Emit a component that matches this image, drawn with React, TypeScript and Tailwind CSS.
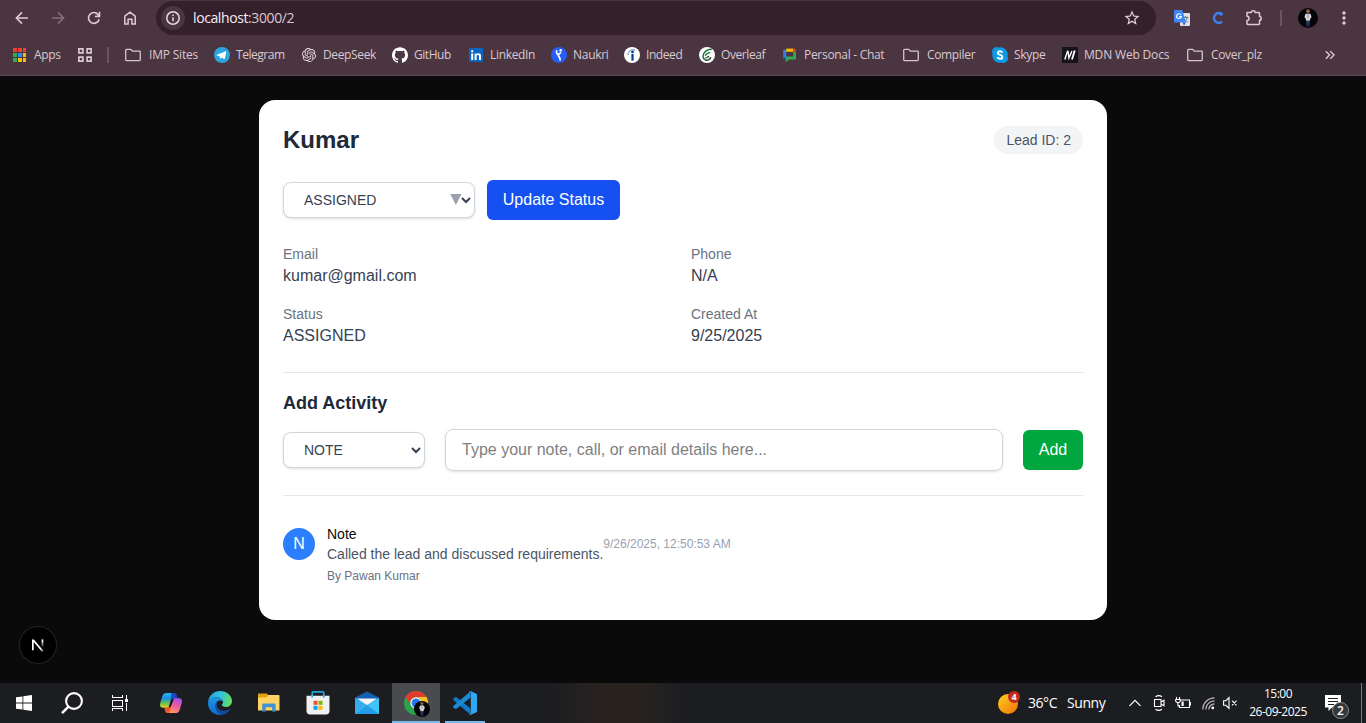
import React from "react";
import { MdStarBorder, MdMoreVert } from "react-icons/md";
import { SiOpenai, SiGithub } from "react-icons/si";

type Mark = { label: string; cell: string; gap: string; track: string; icon: React.ReactNode };

const BackIcon = () => (
  <svg width="16" height="16" viewBox="0 0 16 16" fill="none" stroke="#e3c9d6" strokeWidth="1.6">
    <path d="M14 8H3M8 2.4 2.4 8 8 13.6" />
  </svg>
);

const ForwardIcon = () => (
  <svg width="16" height="16" viewBox="0 0 16 16" fill="none" stroke="#86707c" strokeWidth="1.6">
    <path d="M2 8h11M8 2.4 13.6 8 8 13.6" />
  </svg>
);

const ReloadIcon = () => (
  <svg width="16" height="16" viewBox="0 0 16 16" fill="none" stroke="#e3c9d6" strokeWidth="1.6">
    <path d="M13.2 9.2A5.4 5.4 0 1 1 12 4.4L13.4 6" />
    <path d="M13.5 1.8v4.6H9" />
  </svg>
);

const HomeIcon = () => (
  <svg width="16" height="16" viewBox="0 0 16 16" fill="none" stroke="#e3c9d6" strokeWidth="1.5">
    <path d="M2.8 6.2 8 2.1l5.2 4.1v7.9H9.9V9.2H6.1v4.9H2.8z" />
  </svg>
);

const InfoIcon = () => (
  <svg width="16" height="16" viewBox="0 0 16 16" fill="none" stroke="#e8d8e0" strokeWidth="1.5">
    <circle cx="8" cy="8" r="6.2" />
    <path d="M8 7.2v4M8 4.4v1.6" />
  </svg>
);

const PuzzleIcon = () => (
  <svg width="18" height="18" viewBox="0 0 18 18" fill="none" stroke="#e3c9d6" strokeWidth="1.500" strokeLinejoin="round">
    <path d="M2 3.500h4.300a1.900 1.700 0 0 1 3.800 0h3.700c.4 0 .7.3.7.7v3.300a1.700 1.900 0 0 1 0 3.800v3.500c0 .4-.3.700-.7.700H2.700c-.4 0-.7-.3-.7-.7v-3.300c2.800-.3 2.800-3.900 0-4.200z" />
  </svg>
);

const TranslateIcon = () => (
  <svg width="16" height="16" viewBox="0 0 16 16">
    <rect x="6" y="3" width="10" height="13" rx="1" fill="#dfe1e4" />
    <path d="M9 7.4h5.4M11.6 6v1.4M13.4 7.6c-.6 2-2 3.5-3.8 4.400M10.4 9c.6 1.2 1.8 2.4 3.400 3" stroke="#5a7d82" strokeWidth="1" fill="none" />
    <path d="M1 0h7.400l3.400 12.600H1a1 1 0 0 1-1-1V1a1 1 0 0 1 1-1z" fill="#4285f4" />
    <path d="M8.600 12.600h3.200L10 15.600z" fill="#2a56c6" />
    <path d="M7 4.900A2.400 2.400 0 1 0 7.300 6.600H5.200" stroke="#fff" strokeWidth="1.100" fill="none" />
  </svg>
);

const LetterCIcon = () => (
  <svg width="14" height="14" viewBox="0 0 14 14" fill="none" stroke="#3d7ff0" strokeWidth="2.500">
    <path d="M11 3.200A4.900 4.900 0 1 0 11 10.800" />
    <path d="M8.800 4.600 12 2.600" strokeWidth="1.500" />
  </svg>
);

const Person = ({ size }: { size: number }) => (
  <svg className="block" width={size} height={size} viewBox="0 0 20 20">
    <circle cx="10" cy="10" r="10" fill="#050407" />
    <circle cx="10" cy="3.200" r="1.700" fill="#a06a55" />
    <path d="M7.600 2.400C8 .7 12 .6 12.300 2.400L11 1.900z" fill="#5b3327" />
    <path d="M7.400 6 10 5.400l2.600.6.900 3.200-1.200 1.300-.4 2.200H8.100l-.4-2.200-1.200-1.300z" fill="#d6d6dc" />
    <path d="M9.700 6h.6v4h-.6z" fill="#5a5c68" />
    <path d="M8.300 12.700h3.400l-.2 6.100h-.9L10 14.200l-.6 4.600h-.9z" fill="#27407c" />
  </svg>
);

const FolderIcon = () => (
  <svg width="16" height="16" viewBox="0 0 16 16" fill="none" stroke="#d5c6cd" strokeWidth="1.300">
    <path d="M.7 3.200c0-.5.3-.8.8-.8h4.200l1.700 1.800h7.100c.5 0 .8.3.8.8v7.800c0 .5-.3.8-.8.8h-13c-.5 0-.8-.3-.8-.8z" />
  </svg>
);

const AppsIcon = () => (
  <svg width="14" height="14" viewBox="0 0 14 14" shapeRendering="crispEdges">
    <path fill="#ea4335" d="M0 0h4v4H0zM5 0h4v4H5zM10 0h3v4h-3z" />
    <path fill="#34a853" d="M0 5h4v4H0zM0 10h4v4H0z" />
    <path fill="#2b8cf4" d="M5 5h4v4H5z" />
    <path fill="#fbbc04" d="M10 5h3v4h-3zM5 10h4v4H5zM10 10h3v4h-3z" />
  </svg>
);

const GroupsIcon = () => (
  <svg width="14" height="14" viewBox="0 0 14 14" fill="none" stroke="#d9c9d1" strokeWidth="1.700">
    <path d="M.9.900h4v4h-4zM9.100.900h4v4h-4zM.9 9.100h4v4h-4zM9.100 9.100h4v4h-4z" />
  </svg>
);

const TelegramIcon = () => (
  <svg width="16" height="16" viewBox="0 0 16 16">
    <circle cx="8" cy="8" r="8" fill="#2ca5e0" />
    <path d="m2.900 7.800 8.700-3.600c.5-.2.900.1.700.8l-1.400 6.600c-.1.500-.5.600-.9.400L7.800 10.400l-1.100 1.100c-.3.300-.6.100-.7-.3l-.6-2-2.500-.8c-.5-.1-.5-.4 0-.6z" fill="#fff" />
  </svg>
);

const LinkedInIcon = () => (
  <svg width="16" height="16" viewBox="0 0 16 16">
    <rect x="1" y="1" width="14" height="14" rx=".8" fill="#0a66c2" />
    <path fill="#fff" d="M3.200 6.400h2V13h-2zM4.200 3.100a1.150 1.150 0 1 1 0 2.300 1.150 1.150 0 0 1 0-2.300zM6.600 6.400h1.900v.9c.4-.7 1.100-1.100 2-1.100 1.900 0 2.500 1.200 2.500 2.900V13h-2V9.600c0-.9-.2-1.600-1.100-1.600-1 0-1.300.7-1.300 1.600V13h-2z" />
  </svg>
);

const NaukriIcon = () => (
  <svg width="16" height="16" viewBox="0 0 16 16">
    <circle cx="8" cy="8" r="8" fill="#275df5" />
    <circle cx="9.600" cy="3.400" r="1.300" fill="#fff" />
    <path d="M5.600 3.200v2.600c0 1.200 1 1.500 1.800 2.100M10.200 5.800C7.800 6.400 7 8 7.600 9.200c.5 1 1.700 1.100 1.500 4.400" stroke="#fff" strokeWidth="1.700" fill="none" />
  </svg>
);

const IndeedIcon = () => (
  <svg width="16" height="16" viewBox="0 0 16 16">
    <circle cx="8" cy="8" r="8" fill="#fff" />
    <circle cx="8.500" cy="4.900" r="1.400" fill="#003a9b" />
    <path d="M7.400 7h2.200v6.600H7.400z" fill="#003a9b" />
    <path d="M3.800 7.800C4.300 4 7.400 1.800 11.200 3.200" stroke="#4f79bd" strokeWidth="1" fill="none" />
  </svg>
);

const OverleafIcon = () => (
  <svg width="16" height="16" viewBox="0 0 16 16">
    <circle cx="8" cy="8" r="8" fill="#fff" />
    <path d="M12.800 2.400C8.500 2 4 5.200 4 9.600c0 1.600.7 2.700 2 3.300" stroke="#1f7a3d" strokeWidth="1.500" fill="none" />
    <path d="M6.200 8.800c1-2.200 3-3.400 5.200-3.200M5.800 10.800c1.400.4 2.600-.2 3.400-1.600" stroke="#1f7a3d" strokeWidth="1.300" fill="none" />
    <path d="M6 12.900c2.400 1 5-.2 5.900-2.600M9 9.400l1 .8" stroke="#2b2f2c" strokeWidth="1.300" fill="none" />
  </svg>
);

const ChatIcon = () => (
  <svg width="16" height="16" viewBox="0 0 16 16">
    <path d="M1.200 2.600h3v8h-3z" fill="#2f80ed" />
    <path d="M4.200 1.600h7V4.800h-7z" fill="#fbbc04" />
    <path d="M11.200 1.600h1c.8 0 1.300.5 1.300 1.300v1.900h-2.300z" fill="#ea4335" />
    <path d="M11.200 4.800H14v6.700c0 .6-.4 1-1 1H7L4.400 15c-.4.300-.7.100-.7-.3V9.600h7.500z" fill="#34a853" />
    <path d="M1.200 10.600h2.500v1.600c-1.600 0-2.500-.5-2.500-1.600z" fill="#1a66ca" />
  </svg>
);

const SkypeIcon = () => (
  <svg width="16" height="16" viewBox="0 0 16 16">
    <path d="M0 4.500A4.500 4.500 0 0 1 6.500.5 7.500 7.500 0 0 1 15.500 9.500a4.500 4.500 0 0 1-6 6A7.500 7.500 0 0 1 .5 6.500z" fill="#0a9ae6" />
    <path d="M10.400 5.600C9.900 4.700 9.100 4.300 8 4.300c-1.400 0-2.200.6-2.200 1.600 0 2.300 4.600 1.500 4.600 4 0 1.200-1 1.900-2.400 1.900-1.300 0-2.200-.5-2.700-1.600" stroke="#fff" strokeWidth="1.900" fill="none" />
  </svg>
);

const MdnIcon = () => (
  <svg width="16" height="16" viewBox="0 0 16 16">
    <rect width="16" height="16" fill="#15141a" />
    <path d="M2.800 12.500 5.700 3.600M6 4l.9 7L10 4" stroke="#fff" strokeWidth="1.400" fill="none" />
    <path d="m10 12.500 2.800-9" stroke="#fff" strokeWidth="1.800" fill="none" />
  </svg>
);

const marks: Mark[] = [
  { label: "IMP Sites", cell: "w-[89px]", gap: "gap-2", track: "tracking-[-0.2px]", icon: <FolderIcon /> },
  { label: "Telegram", cell: "w-[87px]", gap: "gap-1.5", track: "tracking-[-0.47px]", icon: <TelegramIcon /> },
  { label: "DeepSeek", cell: "w-[91px]", gap: "gap-1.5", track: "tracking-[-0.36px]", icon: <SiOpenai size={14} color="#e4dce0" /> },
  { label: "GitHub", cell: "w-[76px]", gap: "gap-1.5", track: "tracking-[-0.45px]", icon: <SiGithub size={16} color="#ffffff" /> },
  { label: "LinkedIn", cell: "w-[83px]", gap: "gap-1.5", track: "tracking-[-0.33px]", icon: <LinkedInIcon /> },
  { label: "Naukri", cell: "w-[73px]", gap: "gap-1.5", track: "tracking-[-0.28px]", icon: <NaukriIcon /> },
  { label: "Indeed", cell: "w-[75px]", gap: "gap-1.5", track: "tracking-[-0.42px]", icon: <IndeedIcon /> },
  { label: "Overleaf", cell: "w-[83px]", gap: "gap-1.5", track: "tracking-[-0.42px]", icon: <OverleafIcon /> },
  { label: "Personal - Chat", cell: "w-[121px]", gap: "gap-1.5", track: "tracking-[-0.3px]", icon: <ChatIcon /> },
  { label: "Compiler", cell: "w-[89px]", gap: "gap-2", track: "tracking-[-0.34px]", icon: <FolderIcon /> },
  { label: "Skype", cell: "w-[70px]", gap: "gap-1.5", track: "tracking-[-0.28px]", icon: <SkypeIcon /> },
  { label: "MDN Web Docs", cell: "w-[125px]", gap: "gap-1.5", track: "tracking-[-0.17px]", icon: <MdnIcon /> },
  { label: "Cover_plz", cell: "w-[92px]", gap: "gap-2", track: "tracking-[-0.33px]", icon: <FolderIcon /> },
];

function Cell({ children }: { children: React.ReactNode }) {
  return <div className="flex h-9 w-9 shrink-0 items-center justify-center">{children}</div>;
}

function BrowserBar() {
  return (
    <header className="h-[76px] shrink-0 border-b border-[#5d4c55] bg-[#4b3541] font-['Open_Sans','Noto_Sans',sans-serif]">
      <div className="flex h-9 items-center pl-1">
        <Cell><BackIcon /></Cell>
        <Cell><ForwardIcon /></Cell>
        <Cell><ReloadIcon /></Cell>
        <Cell><HomeIcon /></Cell>
        <div className="ml-2 flex h-[34px] w-[1000px] shrink-0 items-center rounded-full bg-[#33202b] pl-[5px]">
          <div className="flex h-6 w-6 items-center justify-center rounded-full bg-[#4b3541]"><InfoIcon /></div>
          <div className="ml-2 text-sm leading-5 tracking-[-0.4px] text-[#d9c8d0]">
            <span className="text-[#f7edf2]">localhost</span>:3000/2
          </div>
          <div className="ml-auto mr-[15px]"><MdStarBorder size={18} color="#e6d3dc" /></div>
        </div>
        <div className="w-2 shrink-0" />
        <Cell><TranslateIcon /></Cell>
        <Cell><LetterCIcon /></Cell>
        <Cell><PuzzleIcon /></Cell>
        <div className="flex w-[18px] shrink-0 justify-center"><div className="h-4 w-0.5 bg-[#6a5460]" /></div>
        <Cell><Person size={20} /></Cell>
        <Cell><MdMoreVert size={20} color="#e3c9d6" /></Cell>
      </div>
      <div className="flex h-[38px] items-center whitespace-nowrap pl-[13px] text-xs text-[#d8cad1]">
        <div className="flex w-[65px] shrink-0 items-center gap-[7px] tracking-[-0.35px]"><AppsIcon />Apps</div>
        <GroupsIcon />
        <div className="ml-[15px] mr-4 h-4 w-0.5 shrink-0 bg-[#6a5460]" />
        {marks.map((m) => (
          <div key={m.label} className={`flex shrink-0 items-center ${m.cell} ${m.gap} ${m.track}`}>
            <div className="flex h-4 w-4 shrink-0 items-center justify-center">{m.icon}</div>
            {m.label}
          </div>
        ))}
        <svg className="ml-[46px] shrink-0" width="10" height="10" viewBox="0 0 10 10" fill="none" stroke="#dccbd4" strokeWidth="1.400">
          <path d="m.8 1.200 3.800 3.800-3.800 3.800M5.300 1.200l3.800 3.800-3.800 3.800" />
        </svg>
      </div>
    </header>
  );
}

function Field({ label, value }: { label: string; value: string }) {
  return (
    <div>
      <p className="text-sm text-gray-500">{label}</p>
      <p className="text-base text-gray-700">{value}</p>
    </div>
  );
}

function LeadCard() {
  return (
    <main className="h-[520px] w-[848px] rounded-2xl bg-white p-6">
      <div className="mb-6 flex h-8 items-center justify-between">
        <h1 className="text-2xl font-bold text-gray-800">Kumar</h1>
        <span className="rounded-full bg-gray-100 px-3 py-1 text-sm text-gray-600">Lead ID: 2</span>
      </div>
      <div className="mb-6 flex items-center gap-3">
        <div className="relative">
          <select className="block h-9 w-48 rounded-lg border border-gray-300 bg-white pl-4 text-sm text-gray-700 shadow-sm">
            <option>ASSIGNED</option>
          </select>
          <svg className="pointer-events-none absolute right-[13px] top-3" width="12" height="11" viewBox="0 0 12 11">
            <path d="M.2 0h11.300L5.900 11z" fill="#99a1af" />
          </svg>
        </div>
        <button className="h-10 w-[133px] rounded-md bg-[#1550f0] text-base text-white">Update Status</button>
      </div>
      <div className="mb-6 grid grid-cols-2 gap-4">
        <Field label="Email" value="kumar@gmail.com" />
        <Field label="Phone" value="N/A" />
        <Field label="Status" value="ASSIGNED" />
        <Field label="Created At" value="9/25/2025" />
      </div>
      <section className="border-t border-gray-200 pt-4">
        <h2 className="mb-3 text-lg font-bold text-gray-800">Add Activity</h2>
        <div className="mb-6 flex items-center gap-5">
          <select className="h-9 w-[142px] rounded-lg border border-gray-300 bg-white pl-4 text-sm text-gray-700 shadow-sm">
            <option>NOTE</option>
          </select>
          <input
            className="h-[42px] min-w-0 flex-1 rounded-lg border border-gray-300 px-4 text-base shadow-sm placeholder:text-[#808080]"
            placeholder="Type your note, call, or email details here..."
          />
          <button className="h-10 w-[60px] rounded-md bg-[#00a63e] text-base text-white">Add</button>
        </div>
      </section>
      <section className="border-t border-gray-200 pt-7">
        <div className="flex items-start">
          <div className="mr-3 mt-1 flex h-8 w-8 items-center justify-center rounded-full bg-[#2b7fff] text-base text-white">N</div>
          <div>
            <p className="text-sm text-[#0a0a0a]">Note</p>
            <p className="text-sm text-gray-600">Called the lead and discussed requirements.</p>
            <p className="mt-1 text-xs text-gray-500">By Pawan Kumar</p>
          </div>
          <p className="mt-3 text-xs text-gray-400">9/26/2025, 12:50:53 AM</p>
        </div>
      </section>
    </main>
  );
}

function DevBadge() {
  return (
    <div className="absolute bottom-5 left-5 flex h-9 w-9 items-center justify-center rounded-full bg-black ring-1 ring-[#262626]">
      <svg width="14" height="14" viewBox="0 0 14 14" fill="none">
        <defs>
          <linearGradient id="stem" x1="0" y1="0" x2="0" y2="1">
            <stop offset="0.2" stopColor="#fff" />
            <stop offset="1" stopColor="#fff" stopOpacity="0" />
          </linearGradient>
          <linearGradient id="slash" x1="0" y1="0" x2="1" y2="1">
            <stop offset=".75" stopColor="#fff" />
            <stop offset="1" stopColor="#fff" stopOpacity=".2" />
          </linearGradient>
        </defs>
        <path d="M1 12.200V1.400h1.900L12.600 13l-1.400 1L2.700 3.900v8.300z" fill="url(#slash)" />
        <path d="M10.600 1.400h1.700v8.200h-1.700z" fill="url(#stem)" />
      </svg>
    </div>
  );
}

const WindowsIcon = () => (
  <svg width="16" height="16" viewBox="0 0 16 16" fill="#fff">
    <path d="M0 2.300 6.500 1.400v6.200H0zM7.300 1.300 16 0v7.600H7.300zM0 8.400h6.500v6.200L0 13.700zM7.300 8.400H16V16l-8.700-1.300z" />
  </svg>
);

const SearchIcon = () => (
  <svg width="22" height="22" viewBox="0 0 22 22" fill="none" stroke="#fff" strokeWidth="2.100">
    <circle cx="13" cy="9" r="7.900" />
    <path d="M7.500 14.600 1 21.200" strokeWidth="2.400" />
  </svg>
);

const TaskViewIcon = () => (
  <svg width="16" height="16" viewBox="0 0 16 16" fill="none" stroke="#fff" strokeWidth="1" shapeRendering="crispEdges">
    <path d="M.5 0v2.500h10V0M.5 16v-2.500h10V16M.5 5.500h10v5.500H.5zM14.500 0v4M14.500 8v8" />
    <path d="M13 4h3v3h-3z" fill="#fff" stroke="none" />
  </svg>
);

const CopilotIcon = () => (
  <svg width="24" height="24" viewBox="0 0 24 24">
    <defs>
      <linearGradient id="cpA" x1="0" y1="0" x2="0" y2="1">
        <stop offset="0" stopColor="#24b4f2" /><stop offset=".35" stopColor="#1a8fe4" /><stop offset=".65" stopColor="#5cbd62" /><stop offset="1" stopColor="#f2cf1c" />
      </linearGradient>
      <linearGradient id="cpB" x1=".7" y1="0" x2=".3" y2="1">
        <stop offset="0" stopColor="#a64ff0" /><stop offset=".5" stopColor="#ee5a9c" /><stop offset="1" stopColor="#ff9a5c" />
      </linearGradient>
    </defs>
    <path d="M7.500 2h7.500l-1.500 3-3.500 11.800H4.200c-2.800 0-3.800-1.800-3-4.600l2-6.600C4 3 5.300 2 7.500 2z" fill="url(#cpA)" />
    <path d="M12 2h3.200c1.400 0 2.100.7 2.500 2.100l1 3.300h-4.200c-1.500 0-2.200.6-2.700 2L10.600 13 12.400 5z" fill="#1848c8" />
    <path d="M14.500 7.200h5.300c2.800 0 3.800 1.800 3 4.600l-2 6.600c-.8 2.600-2.100 3.600-4.300 3.600H9l1.500-3z" fill="url(#cpB)" />
    <path d="M5.400 16.800h4.100c1.500 0 2.200-.6 2.700-2l1-3-2.200 7.600c-.5 1.800-1.300 2.600-2.600 2.600-1.200 0-1.900-.7-2.300-2.100z" fill="#f2552c" />
    <path d="m12.300 8.400 2.600-.2-3.300 7.600-2 .2z" fill="#1b1c20" />
  </svg>
);

const EdgeIcon = () => (
  <svg width="24" height="24" viewBox="0 0 24 24">
    <defs>
      <linearGradient id="edA" x1="0" y1=".3" x2="1" y2=".5">
        <stop offset="0" stopColor="#26a4e3" /><stop offset=".5" stopColor="#33c3dd" /><stop offset="1" stopColor="#66dd5a" />
      </linearGradient>
      <linearGradient id="edB" x1="0" y1="0" x2="0" y2="1">
        <stop offset="0" stopColor="#2196e3" /><stop offset="1" stopColor="#0b6bd0" />
      </linearGradient>
    </defs>
    <path d="M.2 10.500C1 4.300 6 0 12 0c6.800 0 12 4.700 12 10 0 3.500-2.500 6-6 6-2.500 0-4.200-.9-4.200-1.900 0-.8 1.200-1.200 1.200-3.100C15 8 11.500 6.300 8 6.300 4.500 6.300 1.500 8 .2 10.500z" fill="url(#edA)" />
    <path d="M.2 10.500C2 7 5 6.300 8 6.300c3.500 0 6.700 1.700 7 4.400-1-1.200-2.700-1.500-4-1.100-2 .7-3.500 2.900-3.500 5.400 0 4 3 7.500 6.500 8.700C6.500 25 0 19.500 0 12.500z" fill="url(#edB)" />
    <path d="M11 9.600c-1.300 1-2 2.500-2 4.300 0 3.300 2.900 5.900 6.500 5.900 2.300 0 4.300-.7 6-1.800.5-.3.900.1.600.6-2 3-5 5-8.100 5.100C10.500 22.500 7.500 19 7.500 15c0-2.500 1.500-4.700 3.500-5.400z" fill="#114f9e" />
  </svg>
);

const ExplorerIcon = () => (
  <svg width="22" height="20" viewBox="0 0 22 20">
    <path d="M0 1.500C0 1 .400.500 1 .500h8L10 2v4H0z" fill="#e3a00f" />
    <path d="M0 4.500h8.500L10 2h10.500c.6 0 1 .4 1 1v14.500H0z" fill="#ffd464" />
    <path d="M4.200 18.500V11.800c0-.8.5-1.300 1.300-1.300h10.800c.8 0 1.300.5 1.300 1.300v6.700h-3.500v-4.200H7.800v4.200z" fill="#3f93d4" />
  </svg>
);

const StoreIcon = () => (
  <svg width="24" height="24" viewBox="0 0 24 24">
    <path d="M6.200 6V1.900c0-.6.400-1 1-1h9.600c.6 0 1 .4 1 1V6" stroke="#22a6de" strokeWidth="1.700" fill="none" />
    <path d="M.5 4.800h23V20c0 2.200-1.300 3.500-3.500 3.500H4C1.800 23.500.5 22.200.5 20z" fill="#f0f0f1" />
    <path d="M7.500 9.800h4v4h-4z" fill="#f25022" /><path d="M12.500 9.800h4v4h-4z" fill="#7fba00" />
    <path d="M7.500 14.800h4v4h-4z" fill="#00a4ef" /><path d="M12.500 14.800h4v4h-4z" fill="#ffb900" />
    <path d="M6.200 4.800v1.800M17.800 4.800v1.800" stroke="#22a6de" strokeWidth="1.700" />
  </svg>
);

const MailIcon = () => (
  <svg width="24" height="24" viewBox="0 0 24 24">
    <path d="M0 6.500 12 .500l12 6v8H0z" fill="#0f5fb2" />
    <path d="M2 7.500h20L12 15z" fill="#f4f4f5" />
    <path d="M0 6.800 12 14v9H1c-.6 0-1-.4-1-1z" fill="#35aef0" />
    <path d="M24 6.800V22c0 .6-.4 1-1 1H.5L12 14z" fill="#3fc4f5" />
    <path d="M12 14l11.700 8.700c-.2.200-.4.300-.7.300H.5z" fill="#249de8" />
  </svg>
);

const ChromeIcon = () => (
  <svg width="24" height="24" viewBox="0 0 24 24">
    <circle cx="12" cy="12" r="12" fill="#2ba24c" />
    <path d="M1.600 6A12 12 0 0 1 22.400 6H12a6 6 0 0 0-5.600 8z" fill="#e33b2e" />
    <path d="M22.400 6A12 12 0 0 1 12 24l5.200-9A6 6 0 0 0 12 6z" fill="#fcc31e" />
    <circle cx="12" cy="12" r="5.700" fill="#fff" />
    <circle cx="12" cy="12" r="4.500" fill="#2a72e8" />
  </svg>
);

const CodeIcon = () => (
  <svg width="24" height="24" viewBox="0 0 24 24">
    <path d="M17.500 17.600 3.600 6.200 1.800 6.300.3 7.800v1.300l17.200 14.600z" fill="#0f7cc8" />
    <path d="M17.500 6.400 3.600 17.800l-1.800-.1-1.500-1.500v-1.300L17.500.3z" fill="#1a8ad6" />
    <path d="M17.300 0 23 2.600c.6.300 1 .8 1 1.500v15.800c0 .7-.4 1.200-1 1.500L17.300 24c-.8.200-1.300-.1-1.800-.6 1.400.5 2.300-.1 2.300-1.400V2c0-1.300-.9-1.900-2.300-1.400.5-.5 1-.8 1.800-.6z" fill="#2ea8f2" />
  </svg>
);

function Task({ children, className = "" }: { children: React.ReactNode; className?: string }) {
  return <div className={`relative flex h-10 w-12 shrink-0 items-center justify-center ${className}`}>{children}</div>;
}

function Taskbar() {
  return (
    <footer className="flex h-10 shrink-0 bg-[#1c1d21] bg-[linear-gradient(90deg,transparent_550px,#29231f_610px,#29231f_640px,transparent_680px)] font-['Open_Sans','Noto_Sans',sans-serif] text-white">
      <Task><WindowsIcon /></Task>
      <Task><SearchIcon /></Task>
      <Task><TaskViewIcon /></Task>
      <div className="ml-[3px] flex gap-px">
        <Task><CopilotIcon /></Task>
        <Task><EdgeIcon /></Task>
        <Task><ExplorerIcon /></Task>
        <Task><StoreIcon /></Task>
        <Task><MailIcon /></Task>
        <Task className="bg-[#4a4b4f]">
          <ChromeIcon />
          <div className="absolute left-[22px] top-[18px]"><Person size={16} /></div>
          <div className="absolute bottom-0 left-0 h-0.5 w-12 bg-[#76b9ed]" />
        </Task>
        <Task>
          <CodeIcon />
          <div className="absolute bottom-0 left-1 h-0.5 w-10 bg-[#76b9ed]" />
        </Task>
      </div>
      <div className="ml-auto flex items-center whitespace-nowrap">
        <div className="relative h-6 w-6">
          <svg width="24" height="24" viewBox="0 0 24 24">
            <defs>
              <linearGradient id="sun" x1="0" y1="0" x2="1" y2="1">
                <stop offset="0" stopColor="#ffd21f" /><stop offset="1" stopColor="#f0700a" />
              </linearGradient>
            </defs>
            <circle cx="11" cy="13" r="10" fill="url(#sun)" />
          </svg>
          <span className="absolute left-[11px] top-0 flex h-3 w-3 items-center justify-center rounded-full bg-[#c42b1c] text-[9px] font-bold leading-3">4</span>
        </div>
        <div className="flex w-[98px] gap-[10px] pl-[7px] text-[14px] leading-5 tracking-[-0.45px]"><span>36°C</span><span>Sunny</span></div>
        <div className="flex w-8 justify-center">
          <svg width="12" height="8" viewBox="0 0 12 8" fill="none" stroke="#fff" strokeWidth="1.200"><path d="M.5 6.800 6 1.300l5.500 5.500" /></svg>
        </div>
        <div className="flex w-4 justify-center">
          <svg width="12" height="16" viewBox="0 0 12 16" fill="none" stroke="#fff" strokeWidth="1.100">
            <path d="M2.500 1.800C4.500.300 7 .300 9 1.800M2.500 14.200c2 1.500 4.500 1.500 6.500 0M1.500 4.500h6.500v7H1.500zM8 7l3-1.800v5.600L8 9" />
          </svg>
        </div>
        <div className="flex w-8 justify-center">
          <svg width="16" height="14" viewBox="0 0 16 14" fill="none" stroke="#fff" strokeWidth="1.100">
            <path d="M6 4h8.500v7.500H4.500V9M14.500 6.500h1.200v2.500h-1.200M1.500 1v2.500M4.500 1v2.500M.7 3.500h4.600v1.800L4 6.500H2L.7 5.300zM3 6.500v3.500h1.500" />
            <path d="M6.500 5.500h2.200V10H6.500z" fill="#fff" stroke="none" />
          </svg>
        </div>
        <div className="flex w-[18px] justify-center">
          <svg width="13" height="13" viewBox="0 0 13 13" fill="none" stroke="#bdbdc0" strokeWidth="1.200">
            <path d="M.8 12.500A11.800 11.800 0 0 1 12.500.8M3.800 12.500a8.800 8.800 0 0 1 8.700-8.700M6.800 12.500a5.800 5.800 0 0 1 5.700-5.700" />
            <circle cx="10.800" cy="10.900" r="1.400" fill="#fff" stroke="none" />
          </svg>
        </div>
        <div className="flex w-[26px] justify-center">
          <svg width="14" height="14" viewBox="0 0 14 14" fill="none" stroke="#fff" strokeWidth="1.100">
            <path d="M.6 4.700h2.300L6 1.500v11L2.900 9.300H.6zM9 4.700l4.500 4.600M13.500 4.700 9 9.300" />
          </svg>
        </div>
        <div className="flex w-[70px] flex-col items-center text-xs leading-[18px] tracking-[-0.5px]">
          <span>15:00</span><span>26-09-2025</span>
        </div>
        <div className="relative h-10 w-12">
          <svg className="absolute left-3 top-3" width="16" height="16" viewBox="0 0 16 16">
            <path d="M0 0h16v12.500H7L3.500 16v-3.500H0z" fill="#fff" />
            <path d="M3 3.500h10M3 6.500h10M3 9.500h6" stroke="#1c1d21" strokeWidth="1" />
          </svg>
          <span className="absolute left-[19px] top-[19px] flex h-[17px] w-[17px] items-center justify-center rounded-full border border-[#8b8b8e] bg-[#36373b] text-[12px] font-semibold">2</span>
        </div>
        <div className="h-10 w-[5px] border-l border-[#77787b]" />
      </div>
    </footer>
  );
}

export default function App() {
  return (
    <div className="flex h-[723px] w-[1366px] flex-col overflow-hidden">
      <BrowserBar />
      <div className="relative flex flex-1 justify-center bg-[#0a0a0a] pt-6 font-['Liberation_Sans',Arial,sans-serif]">
        <LeadCard />
        <DevBadge />
      </div>
      <Taskbar />
    </div>
  );
}
